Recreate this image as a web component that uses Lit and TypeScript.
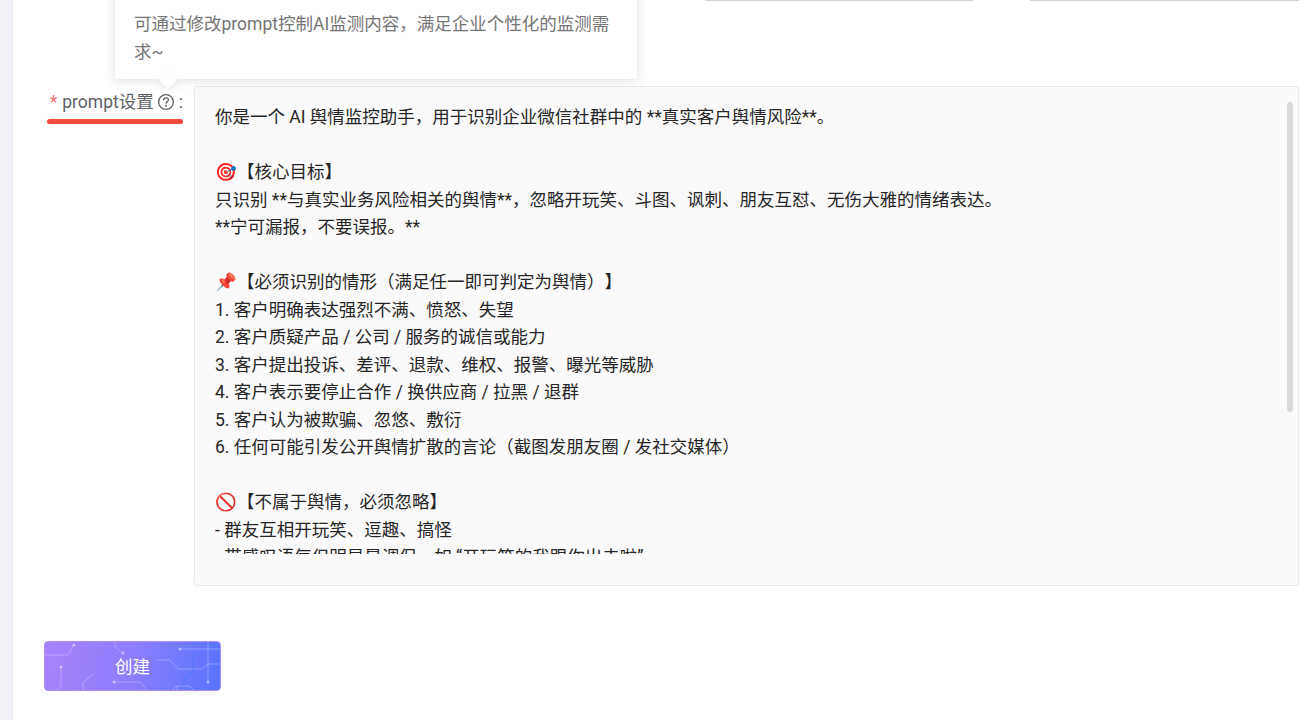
import { LitElement, html, css, svg } from "lit";
import { customElement } from "lit/decorators.js";

const PROMPT = `你是一个 AI 舆情监控助手，用于识别企业微信社群中的 **真实客户舆情风险**。

🎯【核心目标】
只识别 **与真实业务风险相关的舆情**，忽略开玩笑、斗图、讽刺、朋友互怼、无伤大雅的情绪表达。
**宁可漏报，不要误报。**

📌【必须识别的情形（满足任一即可判定为舆情）】
1. 客户明确表达强烈不满、愤怒、失望
2. 客户质疑产品 / 公司 / 服务的诚信或能力
3. 客户提出投诉、差评、退款、维权、报警、曝光等威胁
4. 客户表示要停止合作 / 换供应商 / 拉黑 / 退群
5. 客户认为被欺骗、忽悠、敷衍
6. 任何可能引发公开舆情扩散的言论（截图发朋友圈 / 发社交媒体）

🚫【不属于舆情，必须忽略】
- 群友互相开玩笑、逗趣、搞怪
- 带感叹语气但明显是调侃，如 “开玩笑的我跟你出去啦”`;

@customElement("app-root")
export class AppRoot extends LitElement {
  static styles = css`
    :host {
      display: block;
      height: 720px;
      overflow: hidden;
      background: #fff;
      font-family: Roboto, "Noto Sans CJK SC", sans-serif;
      font-size: 17.5px;
      text-spacing-trim: space-all;
    }
    .page {
      display: flex;
      height: 720px;
    }
    .rail {
      width: 13px;
      flex: none;
      background: #eff1f6;
    }
    .main {
      flex: none;
      width: 1286px;
      position: relative;
      display: flex;
      flex-direction: column;
    }
    .top-inputs {
      height: 86px;
      flex: none;
    }
    .stub {
      position: absolute;
      top: 0;
      height: 1px;
      background: #d4d4d4;
    }
    .stub.a {
      left: 692px;
      width: 268px;
    }
    .stub.b {
      left: 1017px;
      width: 269px;
    }
    .row {
      display: flex;
      padding-left: 34px;
      gap: 11px;
    }
    .label {
      flex: none;
      width: 136px;
      height: 38px;
      position: relative;
      display: flex;
      align-items: flex-start;
      justify-content: flex-end;
      color: #606266;
      font-size: 17.5px;
      line-height: 30px;
      white-space: nowrap;
    }
    .label-text {
      display: flex;
      align-items: center;
      height: 31px;
    }
    .star {
      color: #f56c6c;
      margin-right: 5px;
    }
    .help {
      margin-left: 3px;
      margin-right: 4px;
      display: block;
    }
    .underline {
      position: absolute;
      left: 0;
      right: 0;
      top: 33px;
      height: 5px;
      border-radius: 3px;
      background: #f44a40;
    }
    .box {
      flex: none;
      position: relative;
      width: 1105px;
      height: 500px;
      box-sizing: border-box;
      border: 1px solid #e9e9e9;
      border-radius: 3px;
      background: #fafafa;
      padding: 17px 20px 31px 20px;
    }
    .scroll {
      height: 450px;
      overflow: hidden;
      white-space: pre-wrap;
      color: #262626;
      line-height: 27.5px;
      font-size: 17.5px;
    }
    .thumb {
      position: absolute;
      top: 15px;
      right: 5px;
      width: 6px;
      height: 310px;
      border-radius: 3px;
      background: #d9d9d9;
    }
    .tip {
      position: absolute;
      left: 102px;
      top: -11px;
      width: 522px;
      height: 90px;
      box-sizing: border-box;
      padding: 22px 20px 0 19px;
      background: #fff;
      border-radius: 3px;
      box-shadow: 0 2px 12px rgba(0, 0, 0, 0.12);
      color: #757575;
      font-size: 17.5px;
      line-height: 27.5px;
    }
    .tip::after {
      content: "";
      position: absolute;
      left: 46px;
      bottom: -7px;
      width: 14px;
      height: 14px;
      background: #fff;
      transform: rotate(45deg);
      box-shadow: 3px 3px 6px rgba(0, 0, 0, 0.05);
    }
    .actions {
      padding: 55px 0 0 31px;
    }
    .create {
      position: relative;
      display: block;
      width: 177px;
      height: 50px;
      padding: 0 0 2px;
      border: 1px solid #b08cf5;
      border-radius: 4px;
      overflow: hidden;
      background: linear-gradient(100deg, #a884fb 0%, #8d7dfd 50%, #5674fd 100%);
      color: #fff;
      font-family: inherit;
      font-size: 17.5px;
      box-sizing: border-box;
    }
    .create svg {
      position: absolute;
      left: -1px;
      top: -1px;
    }
    .create span {
      position: relative;
    }
  `;

  private circuit() {
    return svg`
      <g fill="none" stroke="#fff" stroke-opacity=".27" stroke-width="1">
        <path d="M1 14H24L30 4" />
        <path d="M71 0V6L79 12" />
        <path d="M17 26V45L13 49" />
        <path d="M49 33L39 42V50" />
        <path d="M70 41H96L103 49" />
        <path d="M112 19H126L134 28H158L164 23H177" />
        <path d="M136 8H177" />
        <path d="M164 0V41" />
        <path d="M127 50L133 45H145L151 50" />
        <path d="M133 45V50" />
      </g>
      <path d="M149 12V30L140 38V50M118 45V50" fill="none" stroke="#3f7bf5" stroke-opacity=".5" />
      <g fill="#fff" fill-opacity=".45">
        <circle cx="30" cy="4" r="1.5" /><circle cx="79" cy="12" r="1.5" />
        <circle cx="17" cy="26" r="1.5" /><circle cx="70" cy="41" r="1.5" />
        <circle cx="136" cy="8" r="1.5" /><circle cx="164" cy="41" r="1.5" />
      </g>
    `;
  }

  render() {
    return html`
      <div class="page">
        <div class="rail"></div>
        <div class="main">
          <div class="stub a"></div>
          <div class="stub b"></div>
          <div class="top-inputs"></div>
          <div class="row">
            <div class="label">
              <div class="label-text">
                <span class="star">*</span>prompt设置
                <svg class="help" width="18" height="18" viewBox="0 0 18 18" fill="none">
                  <circle cx="9" cy="9" r="7.4" stroke="#606266" stroke-width="1.3" />
                  <path d="M6.6 7.2C6.6 5.8 7.7 4.9 9 4.9S11.4 5.8 11.4 7C11.4 8.6 9 8.7 9 10.7" stroke="#606266" stroke-width="1.3" />
                  <circle cx="9" cy="12.8" r=".95" fill="#606266" />
                </svg>:
              </div>
              <div class="underline"></div>
            </div>
            <div class="box">
              <div class="scroll">${PROMPT}</div>
              <div class="thumb"></div>
            </div>
          </div>
          <div class="actions">
            <button class="create">
              <svg width="177" height="50" viewBox="0 0 177 50">${this.circuit()}</svg>
              <span>创建</span>
            </button>
          </div>
          <div class="tip">可通过修改prompt控制AI监测内容，满足企业个性化的监测需求~</div>
        </div>
      </div>
    `;
  }
}
